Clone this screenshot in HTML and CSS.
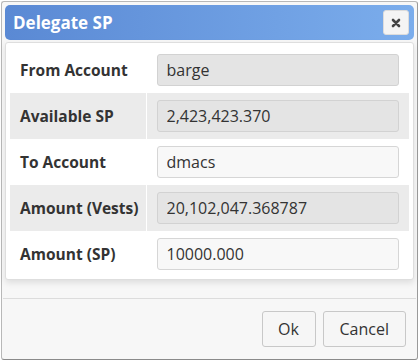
FILE: index.html
```html
<!DOCTYPE html>
<html lang="en">
<head>
<meta charset="UTF-8">
<meta name="viewport" content="width=device-width, initial-scale=1.0">
<title>Delegate SP</title>
<link rel="stylesheet" href="styles.css">
</head>
<body>

<div class="dialog">
    <div class="titlebar">
        <span class="title">Delegate SP</span>
        <button class="close" type="button" title="Close">
            <svg width="10" height="10" viewBox="0 0 10 10"><path d="M2 2 L8 8 M8 2 L2 8" stroke="#444" stroke-width="2.6" stroke-linecap="round"/></svg>
        </button>
    </div>
    <div class="panel">
        <table class="fields">
            <tr>
                <td class="label">From Account</td>
                <td class="value"><input type="text" value="barge" readonly></td>
            </tr>
            <tr class="odd">
                <td class="label">Available SP</td>
                <td class="value"><input type="text" value="2,423,423.370" readonly></td>
            </tr>
            <tr>
                <td class="label">To Account</td>
                <td class="value"><input type="text" class="edit" value="dmacs"></td>
            </tr>
            <tr class="odd">
                <td class="label">Amount (Vests)</td>
                <td class="value"><input type="text" value="20,102,047.368787" readonly></td>
            </tr>
            <tr>
                <td class="label">Amount (SP)</td>
                <td class="value"><input type="text" class="edit" value="10000.000"></td>
            </tr>
        </table>
    </div>
    <div class="buttons">
        <button type="button" class="btn ok">Ok</button>
        <button type="button" class="btn">Cancel</button>
    </div>
</div>

</body>
</html>
```

FILE: styles.css
```css
body {
    font-family: "Open Sans", Arial, sans-serif;
    margin: 0;
    padding: 0;
    background-color: #fff;
    color: #333;
}
.dialog {
    box-sizing: border-box;
    width: 417px;
    height: 359px;
    margin: 1px;
    padding: 3px;
    background-color: #f7f7f7;
    border: 1px solid #b8b8b8;
    border-bottom-color: #8a8a8a;
    border-right-color: #9a9a9a;
    border-radius: 3px;
    display: flex;
    flex-direction: column;
}
.titlebar {
    height: 35px;
    flex-shrink: 0;
    display: flex;
    align-items: center;
    justify-content: space-between;
    padding: 0 5px 0 8px;
    border-radius: 5px;
    background: linear-gradient(to right, #5a89d4, #7badec);
}
.title {
    color: #fff;
    font-weight: bold;
    font-size: 17px;
    line-height: 1;
    margin-top: -1px;
}
.close {
    box-sizing: border-box;
    width: 26px;
    height: 25px;
    padding: 0;
    display: flex;
    align-items: center;
    justify-content: center;
    background-color: #f4f4f4;
    border: 1px solid #dcdcdc;
    border-radius: 3px;
}
.panel {
    margin-top: 2px;
    padding: 4px 4px 2px 4px;
    background-color: #fff;
    border: 1px solid #dedede;
    border-radius: 3px;
    box-shadow: 0 3px 6px rgba(0, 0, 0, 0.1);
}
.fields {
    width: 100%;
    border-collapse: collapse;
}
.fields tr {
    height: 46px;
}
.fields tr.odd {
    background-color: #ebebeb;
}
.fields .label {
    width: 136px;
    box-sizing: border-box;
    padding: 0 0 0 10px;
    font-weight: bold;
    font-size: 15.5px;
    border-right: 1px solid #fff;
}
.fields .value {
    padding: 0 10px;
}
.fields input {
    box-sizing: border-box;
    width: 100%;
    height: 32px;
    padding: 0 9px;
    font-family: "Open Sans", Arial, sans-serif;
    font-size: 16px;
    color: #333;
    background-color: #e4e4e4;
    border: 1px solid #d2d2d2;
    border-radius: 3px;
    outline: none;
}
.fields input.edit {
    background-color: #f8f8f8;
    border-color: #d6d6d6;
}
.buttons {
    margin: 18px -2px 0 -2px;
    padding: 12px 10px 0 0;
    border-top: 1px solid #dcdcdc;
    display: flex;
    justify-content: flex-end;
    gap: 7px;
}
.btn {
    height: 36px;
    padding: 0 16px;
    font-family: "Open Sans", Arial, sans-serif;
    font-size: 16px;
    color: #333;
    background-color: #f6f6f6;
    border: 1px solid #c8c8c8;
    border-radius: 3px;
}
.btn.ok {
    width: 54px;
    padding: 0;
}
```
